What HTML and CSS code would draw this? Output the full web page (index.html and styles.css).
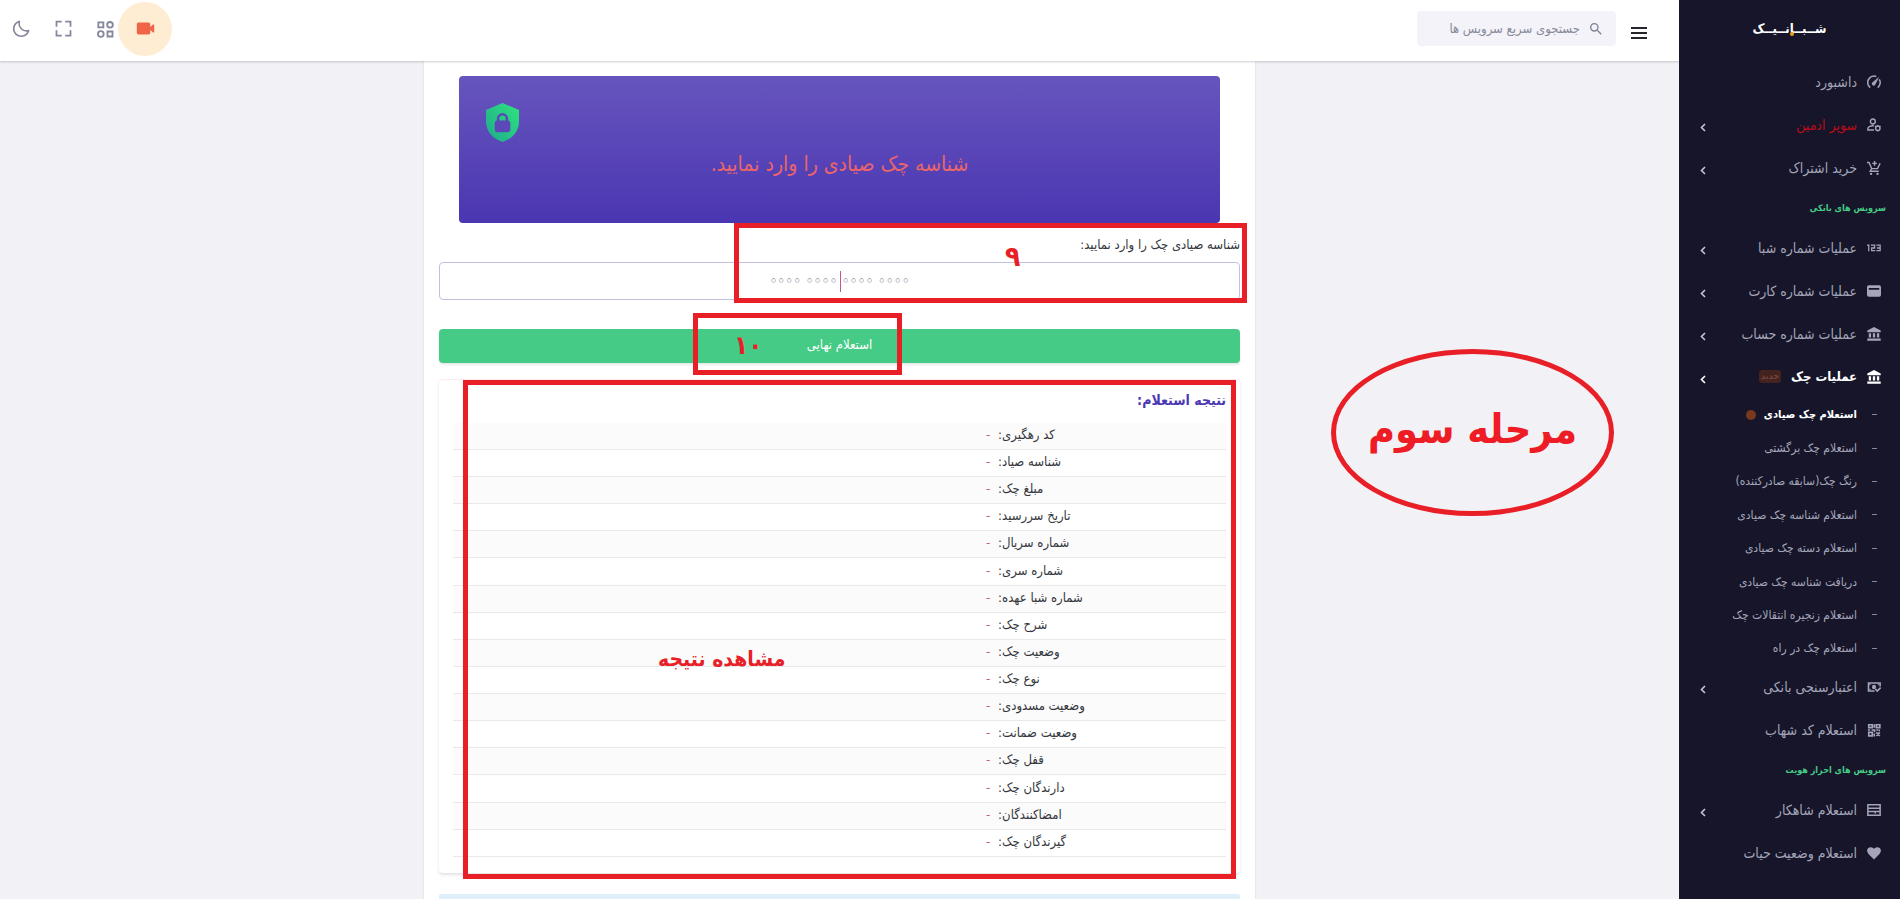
FILE: index.html
```html
<!DOCTYPE html>
<html lang="fa" dir="rtl">
<head>
<meta charset="utf-8">
<title>شبانیک - استعلام چک صیادی</title>
<link rel="stylesheet" href="styles.css">
</head>
<body>
<svg class="sprite" aria-hidden="true">
  <symbol id="i-chevron" viewBox="0 0 6 9"><path d="M5 1 1.500 4.500 5 8" fill="none" stroke="currentColor" stroke-width="1.600"/></symbol>
  <symbol id="i-bank" viewBox="0 0 24 24"><path fill="currentColor" d="M12 0 .500 6v3h23V6zM3 10.500h4V18H3zM10 10.500h4V18h-4zM17 10.500h4V18h-4zM.500 19.500h23V23.500H.500z"/></symbol>
</svg>
<div class="app">
  <aside class="sidebar">
    <a class="brand" href="#">شــبــانــیــک<span class="brand-dot"></span></a>
    <nav>
      <ul class="menu">
        <li><a class="item" href="#"><svg class="icon" viewBox="0 0 24 24"><path d="M5.500 21.500A11 11 0 0 1 16 2.500M21 7.500a11 11 0 0 1-2.500 14" fill="none" stroke="currentColor" stroke-width="2.800"/><path d="M21 3 14.500 16a3.200 3.200 0 1 1-5-3.500z" fill="currentColor"/></svg><span>داشبورد</span></a></li>
        <li><a class="item danger" href="#"><svg class="icon" viewBox="0 0 24 24"><g fill="none" stroke="currentColor" stroke-width="2.400"><circle cx="10" cy="6" r="4.200"/><path d="M12 13.500c-5-.5-10.500 1.500-10.500 4.500v2.500H12"/><circle cx="18.500" cy="17.500" r="3.800"/></g><path d="M17.500 12h2v2h-2zM17.500 21h2v2h-2zM13 14l1.500-1 1.500 1.500-1.500 1zM24 14l-1.500-1-1.500 1.500 1.500 1z" fill="currentColor"/></svg><span>سوپر ادمین</span><svg class="chevron"><use href="#i-chevron"/></svg></a></li>
        <li><a class="item" href="#"><svg class="icon" viewBox="0 0 24 24"><g fill="none" stroke="currentColor" stroke-width="2.400"><path d="M0 2.500h3.500L8 13h10l4.500-9M8 13l-2.500 4.500H20M13 0v8M9 4h8"/></g><circle cx="7" cy="22" r="2" fill="currentColor"/><circle cx="18" cy="22" r="2" fill="currentColor"/></svg><span>خرید اشتراک</span><svg class="chevron"><use href="#i-chevron"/></svg></a></li>
        <li class="heading">سرویس های بانکی</li>
        <li><a class="item" href="#"><svg class="icon" viewBox="0 0 24 24"><path d="M0 7h3v10.500M6.500 7H13v5H8v4.500h6M16 7h6.500v9.500H16M17 12h5.500" fill="none" stroke="currentColor" stroke-width="2.200"/></svg><span>عملیات شماره شبا</span><svg class="chevron"><use href="#i-chevron"/></svg></a></li>
        <li><a class="item" href="#"><svg class="icon" viewBox="0 0 24 24"><path fill="currentColor" fill-rule="evenodd" d="M3 2h18a3 3 0 0 1 3 3v14a3 3 0 0 1-3 3H3a3 3 0 0 1-3-3V5a3 3 0 0 1 3-3zm0 5v3h18V7z"/></svg><span>عملیات شماره کارت</span><svg class="chevron"><use href="#i-chevron"/></svg></a></li>
        <li><a class="item" href="#"><svg class="icon"><use href="#i-bank"/></svg><span>عملیات شماره حساب</span><svg class="chevron"><use href="#i-chevron"/></svg></a></li>
        <li><a class="item active" href="#"><svg class="icon"><use href="#i-bank"/></svg><span>عملیات چک</span><span class="badge">جدید</span><svg class="chevron"><use href="#i-chevron"/></svg></a>
          <ul class="submenu">
            <li><a class="subitem current" href="#">استعلام چک صیادی<span class="dot"></span></a></li>
            <li><a class="subitem" href="#">استعلام چک برگشتی</a></li>
            <li><a class="subitem" href="#">رنگ چک(سابقه صادرکننده)</a></li>
            <li><a class="subitem" href="#">استعلام شناسه چک صیادی</a></li>
            <li><a class="subitem" href="#">استعلام دسته چک صیادی</a></li>
            <li><a class="subitem" href="#">دریافت شناسه چک صیادی</a></li>
            <li><a class="subitem" href="#">استعلام زنجیره انتقالات چک</a></li>
            <li><a class="subitem" href="#">استعلام چک در راه</a></li>
          </ul>
        </li>
        <li><a class="item" href="#"><svg class="icon" viewBox="0 0 24 24"><path d="M13 19H2.500V5h20v6" fill="none" stroke="currentColor" stroke-width="2.600"/><path d="M4 7h3L4 10zM21 7h-3l3 3zM4 17v-3l3 3z" fill="currentColor"/><ellipse cx="12" cy="12" rx="3.500" ry="4" fill="currentColor"/><path d="m14.500 15.500 3 3.500 6-6" fill="none" stroke="currentColor" stroke-width="2.800"/></svg><span>اعتبارسنجی بانکی</span><svg class="chevron"><use href="#i-chevron"/></svg></a></li>
        <li><a class="item" href="#"><svg class="icon" viewBox="0 0 24 24"><g fill="none" stroke="currentColor" stroke-width="2.800"><path d="M3 3h6v5H3zM16 3h6v5h-6zM3 16h6v6H3zM12.500 2v6M1.500 12h4M8 12h5v4M16 12h3M21 11v3M12.500 18v5M16 16l6 6M22 16l-6 6"/></g></svg><span>استعلام کد شهاب</span></a></li>
        <li class="heading">سرویس های احراز هویت</li>
        <li><a class="item" href="#"><svg class="icon" viewBox="0 0 24 24"><path d="M1.500 3h21v18h-21zM2 9h20M2 14.500h20M14 14.500v3.500" fill="none" stroke="currentColor" stroke-width="2.600"/></svg><span>استعلام شاهکار</span><svg class="chevron"><use href="#i-chevron"/></svg></a></li>
        <li><a class="item" href="#"><svg class="icon" viewBox="0 0 24 24"><path fill="currentColor" d="M12 23 3 14C-2 9 0 2 6.500 2 9 2 11 3.500 12 5c1-1.500 3-3 5.500-3C24 2 26 9 21 14z"/></svg><span>استعلام وضعیت حیات</span></a></li>
      </ul>
    </nav>
  </aside>

  <div class="page">
    <header class="topbar">
      <button class="icon-btn burger" type="button" aria-label="منو"><svg width="16" height="12" viewBox="0 0 16 12"><path d="M0 1h16M0 6h16M0 11h16" stroke="currentColor" stroke-width="2"/></svg></button>
      <label class="search">
        <svg class="search-icon" viewBox="0 0 24 24"><path fill="currentColor" d="M9.500 3A6.500 6.500 0 0 1 16 9.500c0 1.610-.59 3.090-1.560 4.230l.27.27h.79l5 5-1.500 1.500-5-5v-.79l-.27-.27A6.516 6.516 0 0 1 9.500 16 6.500 6.500 0 0 1 3 9.500 6.500 6.500 0 0 1 9.500 3m0 2C7 5 5 7 5 9.500S7 14 9.500 14 14 12 14 9.500 12 5 9.500 5z"/></svg>
        <input type="search" placeholder="جستجوی سریع سرویس ها" aria-label="جستجوی سریع سرویس ها">
      </label>
      <div class="tools">
        <button class="icon-btn video" type="button" aria-label="ویدیو"><svg width="19" height="19" viewBox="0 0 24 24"><path fill="currentColor" d="M3 4.500h13a2 2 0 0 1 2 2V10l3.500-3H23v10h-1.500L18 14v3.500a2 2 0 0 1-2 2H3a2 2 0 0 1-2-2v-11a2 2 0 0 1 2-2z"/></svg></button>
        <button class="icon-btn" type="button" aria-label="برنامه ها"><svg width="20" height="20" viewBox="0 0 24 24"><g fill="none" stroke="currentColor" stroke-width="2.200"><path d="M4 4h6v6H4zM15 15h6v6h-6z"/><circle cx="18" cy="7" r="3.400"/><circle cx="7" cy="18" r="3.400"/></g></svg></button>
        <button class="icon-btn" type="button" aria-label="تمام صفحه"><svg width="21" height="21" viewBox="0 0 24 24"><path fill="currentColor" d="M5 5h5V3H3v7h2zm5 14H5v-5H3v7h7zm11-5h-2v5h-5v2h7zm-2-4h2V3h-7v2h5z"/></svg></button>
        <button class="icon-btn" type="button" aria-label="حالت شب"><svg width="20" height="20" viewBox="0 0 24 24"><path fill="currentColor" d="M20.742 13.045a8.088 8.088 0 0 1-2.077.271c-2.135 0-4.140-.83-5.646-2.336a8.025 8.025 0 0 1-2.064-7.723A1 1 0 0 0 9.730 2.034a10.014 10.014 0 0 0-4.489 2.582c-3.898 3.898-3.898 10.243 0 14.143a9.937 9.937 0 0 0 7.072 2.930 9.930 9.930 0 0 0 7.070-2.929 10.007 10.007 0 0 0 2.583-4.491 1.001 1.001 0 0 0-1.224-1.224zm-2.772 4.301a7.947 7.947 0 0 1-5.656 2.343 7.953 7.953 0 0 1-5.658-2.344c-3.118-3.119-3.118-8.195 0-11.314a7.923 7.923 0 0 1 2.060-1.483 10.027 10.027 0 0 0 2.890 7.848 9.972 9.972 0 0 0 7.848 2.891 8.036 8.036 0 0 1-1.484 2.059z"/></svg></button>
      </div>
    </header>

    <main class="content">
      <div class="card">
        <section class="hero">
          <svg class="shield" viewBox="0 0 34 40"><defs><linearGradient id="sg" x1="1" y1="0" x2="0" y2="1"><stop offset="0" stop-color="#2ee57c"/><stop offset="1" stop-color="#1fa88e"/></linearGradient></defs><path fill="url(#sg)" d="M17 0 34 7v12c0 10-7 18-17 21C7 37 0 29 0 19V7z"/><path d="M12.500 19v-3a4.500 4.500 0 0 1 9 0v3" fill="none" stroke="#5c48b8" stroke-width="2.600"/><rect x="9" y="18" width="16" height="12" rx="2.500" fill="#5c48b8"/></svg>
          <h1 class="hero-title">شناسه چک صیادی را وارد نمایید.</h1>
        </section>

        <form class="form">
          <label class="label" for="sayad">شناسه صیادی چک را وارد نمایید:</label>
          <div class="field">
            <input class="input" id="sayad" type="text" inputmode="numeric" dir="ltr" placeholder="◦◦◦◦ ◦◦◦◦ ◦◦◦◦ ◦◦◦◦">
            <span class="caret"></span>
          </div>
          <button class="submit" type="button">استعلام نهایی</button>
        </form>

        <section class="result">
          <h2 class="result-title">نتیجه استعلام:</h2>
          <table class="table">
            <tbody>
              <tr><th scope="row">کد رهگیری:</th><td>-</td></tr>
              <tr><th scope="row">شناسه صیاد:</th><td>-</td></tr>
              <tr><th scope="row">مبلغ چک:</th><td>-</td></tr>
              <tr><th scope="row">تاریخ سررسید:</th><td>-</td></tr>
              <tr><th scope="row">شماره سریال:</th><td>-</td></tr>
              <tr><th scope="row">شماره سری:</th><td>-</td></tr>
              <tr><th scope="row">شماره شبا عهده:</th><td>-</td></tr>
              <tr><th scope="row">شرح چک:</th><td>-</td></tr>
              <tr><th scope="row">وضعیت چک:</th><td>-</td></tr>
              <tr><th scope="row">نوع چک:</th><td>-</td></tr>
              <tr><th scope="row">وضعیت مسدودی:</th><td>-</td></tr>
              <tr><th scope="row">وضعیت ضمانت:</th><td>-</td></tr>
              <tr><th scope="row">قفل چک:</th><td>-</td></tr>
              <tr><th scope="row">دارندگان چک:</th><td>-</td></tr>
              <tr><th scope="row">امضاکنندگان:</th><td>-</td></tr>
              <tr><th scope="row">گیرندگان چک:</th><td>-</td></tr>
            </tbody>
          </table>
        </section>
        <div class="notice"></div>

        <div class="mark mark-field"></div>
        <div class="mark mark-submit"></div>
        <div class="mark mark-result"></div>
        <span class="note note-nine">۹</span>
        <span class="note note-ten">۱۰</span>
        <span class="note note-view">مشاهده نتیجه</span>
        <div class="stage"><span>مرحله سوم</span></div>
      </div>
    </main>
  </div>
</div>
</body>
</html>
```

FILE: styles.css
```css
* { box-sizing: border-box; }

body {
  margin: 0;
  font-family: "DejaVu Sans Condensed", "DejaVu Sans", sans-serif;
  font-size: 13px;
  color: #34373d;
  background: #f1f1f6;
}

input, button { font-family: inherit; }
ul { list-style: none; margin: 0; padding: 0; }
a { color: inherit; text-decoration: none; }

.sprite { display: none; }

.app { display: flex; height: 100vh; overflow: hidden; }

/* Sidebar */
.sidebar {
  flex: 0 0 221px;
  overflow: hidden;
  background: #16152a;
  color: #a4a5b8;
}

.brand {
  position: relative;
  display: flex;
  align-items: center;
  justify-content: center;
  height: 60px;
  padding-bottom: 4px;
  color: #fff;
  font-size: 13px;
  font-weight: 700;
}

.brand-dot {
  position: absolute;
  left: 111px;
  top: 32px;
  width: 4px;
  height: 4px;
  border-radius: 50%;
  background: #f0a020;
}

.item {
  display: flex;
  align-items: center;
  gap: 10px;
  height: 43px;
  padding: 0 19px 0 21px;
  font-size: 14px;
}

.item.danger span { color: #b90d18; }
.item.active { color: #fff; font-size: 13px; font-weight: 700; }

.icon { width: 14px; height: 14px; flex: none; }

.chevron {
  width: 6px;
  height: 9px;
  margin-right: auto;
  margin-top: 5px;
  color: #c4c5d2;
}

.active .chevron { color: #fff; }

.badge {
  padding: 0 2px;
  border-radius: 3px;
  background: #43231f;
  color: #74433a;
  font-size: 9px;
  line-height: 13px;
}

.heading {
  display: flex;
  align-items: center;
  height: 37px;
  padding: 0 14px;
  color: #45cb85;
  font-size: 9px;
  font-weight: 700;
}

.submenu { display: grid; grid-auto-rows: 1fr; min-height: 267px; }

.subitem {
  display: flex;
  align-items: center;
  height: 100%;
  padding: 0 23px;
  font-size: 12px;
}

.subitem::before {
  content: "";
  width: 5px;
  height: 1px;
  margin-left: 15px;
  background: #85869a;
}

.current { color: #fff; font-size: 11px; font-weight: 700; }

.dot {
  width: 10px;
  height: 10px;
  margin-right: 8px;
  border-radius: 50%;
  background: #78391e;
}

/* Top bar */
.page { flex: 1; min-width: 0; display: flex; flex-direction: column; }

.topbar {
  position: relative;
  z-index: 2;
  display: flex;
  align-items: center;
  gap: 15px;
  height: 61px;
  padding: 0 32px 4px 0;
  flex: none;
  background: #fff;
  box-shadow: 0 1px 2px rgba(50, 60, 60, .25);
}

.icon-btn {
  display: grid;
  place-items: center;
  padding: 0;
  border: 0;
  background: none;
  color: #85879a;
}

.burger { color: #25262c; padding-top: 8px; }

.search {
  display: flex;
  align-items: center;
  gap: 8px;
  width: 199px;
  height: 35px;
  padding: 0 12px;
  border-radius: 4px;
  background: #f3f3f9;
  color: #7f8290;
}

.search-icon { width: 16px; height: 16px; flex: none; }

.search input {
  width: 100%;
  min-width: 0;
  padding: 0;
  border: 0;
  outline: 0;
  background: none;
  font-size: 13px;
}

.search input::placeholder { color: #878a99; opacity: 1; }

.tools { display: flex; align-items: center; margin-right: auto; }
.tools .icon-btn { width: 42px; height: 42px; }

.tools .video {
  width: 54px;
  height: 54px;
  margin-left: -8px;
  border-radius: 50%;
  background: #ffedd3;
  color: #f06548;
}

/* Content */
.content {
  display: flex;
  flex: 1;
  flex-direction: column;
  align-items: center;
  min-height: 0;
  overflow-y: auto;
  scrollbar-width: none;
}

.card {
  position: relative;
  width: 100%;
  max-width: 831px;
  padding: 15px;
  background: #fff;
  box-shadow: 0 1px 2px rgba(56, 65, 74, .15);
}

.hero {
  display: flex;
  flex-direction: column;
  height: 147px;
  margin: 0 20px;
  padding: 27px;
  border-radius: 4px;
  background: linear-gradient(#6755bd, #4b36b2);
}

.shield { width: 33px; height: 39px; align-self: flex-end; }

.hero-title {
  margin: 8px 0 0;
  color: #e9656a;
  font-size: 21px;
  font-weight: 400;
  line-height: 28px;
  text-align: center;
}

.form { display: flex; flex-direction: column; }

.label { margin: 12px 0 7px; line-height: 20px; }
.field { position: relative; }

.input {
  display: block;
  width: 100%;
  height: 38px;
  padding: 0 12px;
  border: 1px solid #c3c0df;
  border-radius: 4px;
  outline: 0;
  font-size: 15px;
  text-align: center;
}

.input::placeholder { color: #5f6275; opacity: 1; }

.caret {
  position: absolute;
  left: 50%;
  top: 9px;
  width: 1px;
  height: 21px;
  background: #c5568c;
}

.submit {
  height: 34px;
  margin-top: 29px;
  padding-bottom: 4px;
  border: 0;
  border-radius: 4px;
  background: #45cb85;
  box-shadow: 0 2px 2px rgba(50, 80, 65, .12);
  color: #fff;
  font-size: 13px;
}

.result {
  margin-top: 16px;
  padding: 11px 14px 16px;
  border-top: 1px solid #fdeaec;
  border-radius: 4px;
  box-shadow: 0 2px 3px rgba(56, 65, 74, .15);
}

.result-title {
  margin: 0 0 14px;
  color: #4b38b3;
  font-size: 14px;
  font-weight: 700;
  line-height: 18px;
}

.table {
  width: 100%;
  height: 434px;
  border-collapse: collapse;
  table-layout: fixed;
}

.table tr { border-bottom: 1px solid #e9e9eb; }
.table tr:nth-child(odd) { background: #fbfbfb; }

.table th,
.table td {
  padding: 0 4px 2px;
  font-weight: 400;
  line-height: 18px;
}

.table th { width: 30%; text-align: left; }
.table td { color: #d2547c; text-align: right; }

.notice {
  height: 60px;
  margin-top: 21px;
  border-radius: 2px;
  background: #dff0fa;
}

/* Tutorial annotations drawn over the card */
.mark { position: absolute; border: 5px solid #e81f27; }
.mark-field { left: 310px; top: 162px; width: 513px; height: 80px; }
.mark-submit { left: 269px; top: 252px; width: 209px; height: 62px; }
.mark-result { left: 39px; top: 319px; width: 773px; height: 499px; }

.note {
  position: absolute;
  color: #e81f27;
  font-weight: 700;
  white-space: nowrap;
}

.note-nine { left: 581px; top: 178px; font-size: 28px; line-height: 36px; }
.note-ten { left: 310px; top: 266px; font-size: 26px; line-height: 36px; }
.note-view { left: 234px; top: 580px; font-size: 21px; line-height: 36px; }

.stage {
  position: absolute;
  left: 907px;
  top: 288px;
  display: grid;
  place-items: center;
  width: 283px;
  height: 167px;
  padding-bottom: 8px;
  border: 5px solid #e81f27;
  border-radius: 50%;
  color: #ee1c24;
  font-size: 41px;
  font-weight: 700;
  white-space: nowrap;
}
```
